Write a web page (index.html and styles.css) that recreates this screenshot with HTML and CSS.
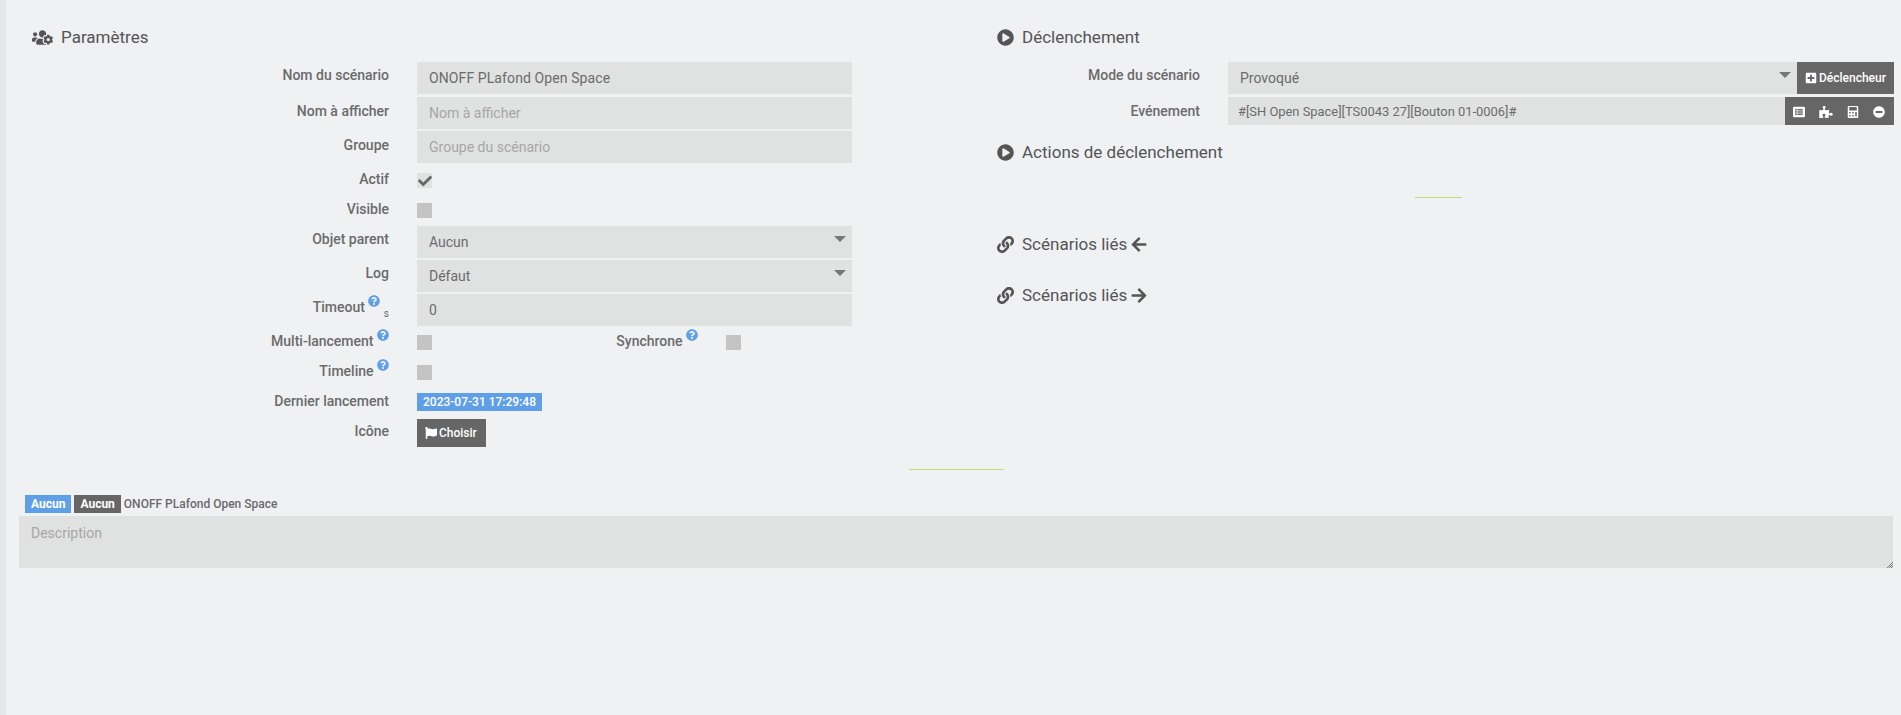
FILE: index.html
```html
<!DOCTYPE html>
<html lang="fr">
<head>
<meta charset="utf-8">
<title>Scénario</title>
<link rel="stylesheet" href="styles.css">
</head>
<body>
<svg class="sprite" xmlns="http://www.w3.org/2000/svg">
  <symbol id="i-users-cog" viewBox="0 0 640 512"><path d="M610.5 341.3c2.6-14.1 2.6-28.5 0-42.6l25.8-14.9c3-1.7 4.3-5.2 3.3-8.5-6.7-21.6-18.2-41.2-33.2-57.4-2.3-2.5-6-3.1-9-1.4l-25.8 14.9c-10.9-9.3-23.4-16.5-36.9-21.3v-29.8c0-3.4-2.4-6.4-5.7-7.1-22.3-5-45-4.8-66.2 0-3.3.7-5.7 3.7-5.7 7.1v29.8c-13.5 4.8-26 12-36.9 21.3l-25.8-14.9c-2.9-1.7-6.7-1.1-9 1.4-15 16.2-26.5 35.8-33.2 57.4-1 3.3.4 6.8 3.3 8.5l25.8 14.9c-2.6 14.1-2.6 28.5 0 42.6l-25.8 14.9c-3 1.7-4.3 5.2-3.3 8.5 6.7 21.6 18.2 41.1 33.2 57.4 2.3 2.5 6 3.1 9 1.4l25.8-14.9c10.9 9.3 23.4 16.5 36.9 21.3v29.8c0 3.4 2.4 6.4 5.7 7.1 22.3 5 45 4.8 66.2 0 3.3-.7 5.7-3.7 5.7-7.1v-29.8c13.5-4.8 26-12 36.9-21.3l25.8 14.9c2.9 1.7 6.7 1.1 9-1.4 15-16.2 26.5-35.8 33.2-57.4 1-3.3-.4-6.8-3.3-8.5l-25.8-14.9zM496 368.5c-26.8 0-48.5-21.8-48.5-48.5s21.8-48.5 48.5-48.5 48.5 21.8 48.5 48.5-21.7 48.5-48.5 48.5zM96 224c35.3 0 64-28.7 64-64s-28.7-64-64-64-64 28.7-64 64 28.7 64 64 64zm224 32c1.9 0 3.7-.5 5.6-.6 8.3-21.7 20.5-42.1 36.3-59.2 7.4-8 17.9-12.6 28.9-12.6 6.9 0 13.7 1.8 19.6 5.3l7.9 4.6c.8-.5 1.6-.9 2.4-1.4 7-14.6 11.2-30.8 11.2-48 0-61.9-50.1-112-112-112S208 82.1 208 144c0 61.9 50.1 112 112 112zm105.2 194.5c-2.3-1.2-4.6-2.6-6.8-3.9-8.2 4.8-15.3 9.8-27.5 9.8-10.9 0-21.4-4.6-28.9-12.6-18.3-19.8-32.3-43.9-40.2-69.6-10.7-34.5 24.9-49.7 25.8-50.3-.1-2.6-.1-5.2 0-7.8l-7.9-4.6c-3.8-2.2-7-5-9.8-8.1-3.3.2-6.5.6-9.8.6-24.6 0-47.6-6-68.5-16h-8.3C179.6 288 128 339.6 128 403.2V432c0 26.5 21.5 48 48 48h255.4c-3.7-6-6.2-12.8-6.2-20.3v-9.2zM173.1 274.6C161.5 263.1 145.6 256 128 256H64c-35.3 0-64 28.7-64 64v32c0 17.7 14.3 32 32 32h65.9c6.3-47.4 34.9-87.3 75.2-109.4z"/></symbol>
  <symbol id="i-play" viewBox="0 0 512 512"><path d="M256 8C119 8 8 119 8 256s111 248 248 248 248-111 248-248S393 8 256 8zm115.7 272l-176 101c-15.8 8.8-35.7-2.5-35.7-21V152c0-18.4 19.8-29.8 35.7-21l176 107c16.4 9.2 16.4 32.9 0 42z"/></symbol>
  <symbol id="i-help" viewBox="0 0 512 512"><path d="M504 256c0 136.997-111.043 248-248 248S8 392.997 8 256C8 119.083 119.043 8 256 8s248 111.083 248 248zM262.655 90c-54.497 0-89.255 22.957-116.549 63.758-3.536 5.286-2.353 12.415 2.715 16.258l34.699 26.31c5.205 3.947 12.621 3.008 16.665-2.122 17.864-22.658 30.113-35.797 57.303-35.797 20.429 0 45.698 13.148 45.698 32.958 0 14.976-12.363 22.667-32.534 33.976C247.128 238.528 216 254.941 216 296v4c0 6.627 5.373 12 12 12h56c6.627 0 12-5.373 12-12v-1.333c0-28.462 83.186-29.647 83.186-106.667 0-58.002-60.165-102-116.531-102zM256 338c-25.365 0-46 20.635-46 46 0 25.364 20.635 46 46 46s46-20.636 46-46c0-25.365-20.635-46-46-46z"/></symbol>
  <symbol id="i-link" viewBox="0 0 512 512"><path d="M326.612 185.391c59.747 59.809 58.927 155.698.36 214.59-.11.12-.24.25-.36.37l-67.2 67.2c-59.27 59.27-155.699 59.262-214.96 0-59.27-59.26-59.27-155.7 0-214.96l37.106-37.106c9.84-9.84 26.786-3.3 27.294 10.606.648 17.722 3.826 35.527 9.69 52.721 1.986 5.822.567 12.262-3.783 16.612l-13.087 13.087c-28.026 28.026-28.905 73.66-1.155 101.96 28.024 28.579 74.086 28.749 102.325.51l67.2-67.19c28.191-28.191 28.073-73.757 0-101.83-3.701-3.694-7.429-6.564-10.341-8.569a16.037 16.037 0 0 1-6.947-12.606c-.396-10.567 3.348-21.456 11.698-29.806l21.054-21.055c5.521-5.521 14.182-6.199 20.584-1.731a152.482 152.482 0 0 1 20.522 17.197zM467.547 44.449c-59.261-59.262-155.69-59.27-214.96 0l-67.2 67.2c-.12.12-.25.25-.36.37-58.566 58.892-59.387 154.781.36 214.59a152.454 152.454 0 0 0 20.521 17.196c6.402 4.468 15.064 3.789 20.584-1.731l21.054-21.055c8.35-8.35 12.094-19.239 11.698-29.806a16.037 16.037 0 0 0-6.947-12.606c-2.912-2.005-6.64-4.875-10.341-8.569-28.073-28.073-28.191-73.639 0-101.83l67.2-67.19c28.239-28.239 74.3-28.069 102.325.51 27.75 28.3 26.872 73.934-1.155 101.96l-13.087 13.087c-4.35 4.35-5.769 10.79-3.783 16.612 5.864 17.194 9.042 34.999 9.69 52.721.509 13.906 17.454 20.446 27.294 10.606l37.106-37.106c59.271-59.259 59.271-155.699.001-214.959z"/></symbol>
  <symbol id="i-left" viewBox="0 0 448 512"><path d="M257.5 445.1l-22.2 22.2c-9.4 9.4-24.6 9.4-33.9 0L7 273c-9.4-9.4-9.4-24.6 0-33.9L201.4 44.7c9.4-9.4 24.6-9.4 33.9 0l22.2 22.2c9.5 9.5 9.3 25-.4 34.3L136.6 216H424c13.3 0 24 10.7 24 24v32c0 13.3-10.7 24-24 24H136.6l120.5 114.8c9.8 9.3 10 24.8.4 34.3z"/></symbol>
  <symbol id="i-right" viewBox="0 0 448 512"><path d="M190.5 66.9l22.2-22.2c9.4-9.4 24.6-9.4 33.9 0L441 239c9.4 9.4 9.4 24.6 0 33.9L246.6 467.3c-9.4 9.4-24.6 9.4-33.9 0l-22.2-22.2c-9.5-9.5-9.3-25 .4-34.3L311.4 296H24c-13.3 0-24-10.7-24-24v-32c0-13.3 10.7-24 24-24h287.4L190.9 101.2c-9.8-9.3-10-24.8-.4-34.3z"/></symbol>
  <symbol id="i-plus" viewBox="0 0 448 512"><path d="M400 32H48C21.5 32 0 53.5 0 80v352c0 26.5 21.5 48 48 48h352c26.5 0 48-21.5 48-48V80c0-26.5-21.5-48-48-48zm-32 252c0 6.6-5.4 12-12 12h-92v92c0 6.6-5.4 12-12 12h-56c-6.6 0-12-5.4-12-12v-92H92c-6.6 0-12-5.4-12-12v-56c0-6.6 5.4-12 12-12h92v-92c0-6.6 5.4-12 12-12h56c6.6 0 12 5.4 12 12v92h92c6.6 0 12 5.4 12 12v56z"/></symbol>
  <symbol id="i-flag" viewBox="0 0 512 512"><path d="M349.565 98.783C295.978 98.783 251.721 64 184.348 64c-24.955 0-47.309 4.384-68.045 12.013a55.947 55.947 0 0 0 3.586-23.562C118.117 24.015 94.806 1.206 66.338.048 34.345-1.254 8 24.296 8 56c0 19.026 9.497 35.825 24 45.945V488c0 13.255 10.745 24 24 24h16c13.255 0 24-10.745 24-24v-94.4c28.311-12.064 63.582-22.122 114.435-22.122 53.588 0 97.844 34.783 165.217 34.783 48.169 0 86.667-16.294 122.505-40.858C506.84 359.452 512 349.571 512 339.045v-243.1c0-23.393-24.269-38.87-45.485-29.016-34.338 15.948-76.454 31.854-116.95 31.854z"/></symbol>
  <symbol id="i-minus" viewBox="0 0 512 512"><path d="M256 8C119 8 8 119 8 256s111 248 248 248 248-111 248-248S393 8 256 8zM124 296c-6.6 0-12-5.4-12-12v-56c0-6.6 5.4-12 12-12h264c6.6 0 12 5.4 12 12v56c0 6.6-5.4 12-12 12H124z"/></symbol>
  <symbol id="i-check" viewBox="0 0 512 512"><path d="M173.898 439.404l-166.4-166.4c-9.997-9.997-9.997-26.206 0-36.204l36.203-36.204c9.997-9.998 26.207-9.998 36.204 0L192 312.69 432.095 72.596c9.997-9.997 26.207-9.997 36.204 0l36.203 36.204c9.997 9.997 9.997 26.206 0 36.204l-294.4 294.401c-9.998 9.997-26.207 9.997-36.204-.001z"/></symbol>
  <symbol id="i-list" viewBox="0 0 512 512"><path d="M464 480H48c-26.51 0-48-21.49-48-48V80c0-26.51 21.49-48 48-48h416c26.51 0 48 21.49 48 48v352c0 26.51-21.49 48-48 48zM128 120c-22.091 0-40 17.909-40 40s17.909 40 40 40 40-17.909 40-40-17.909-40-40-40zm0 96c-22.091 0-40 17.909-40 40s17.909 40 40 40 40-17.909 40-40-17.909-40-40-40zm0 96c-22.091 0-40 17.909-40 40s17.909 40 40 40 40-17.909 40-40-17.909-40-40-40zm288-136v-32c0-6.627-5.373-12-12-12H204c-6.627 0-12 5.373-12 12v32c0 6.627 5.373 12 12 12h200c6.627 0 12-5.373 12-12zm0 96v-32c0-6.627-5.373-12-12-12H204c-6.627 0-12 5.373-12 12v32c0 6.627 5.373 12 12 12h200c6.627 0 12-5.373 12-12zm0 96v-32c0-6.627-5.373-12-12-12H204c-6.627 0-12 5.373-12 12v32c0 6.627 5.373 12 12 12h200c6.627 0 12-5.373 12-12z"/></symbol>
  <symbol id="i-puzzle" viewBox="0 0 576 512"><path d="M519.442 288.651c-41.519 0-59.5 31.593-82.058 31.593C377.409 320.244 432 144 432 144s-196.288 80-196.288-3.297c0-35.827 36.288-46.25 36.288-85.985C272 19.216 243.885 0 210.539 0c-34.654 0-66.366 18.891-66.366 56.346 0 41.364 31.711 59.277 31.711 81.75C175.885 207.719 0 166.758 0 166.758v333.237s178.635 41.047 178.635-28.662c0-22.473-40-40.107-40-81.471 0-37.456 29.25-56.346 63.577-56.346 33.673 0 61.788 19.216 61.788 54.717 0 39.735-36.288 50.158-36.288 85.985 0 60.803 129.675 25.73 181.23 25.73 0 0-34.725-120.101 25.827-120.101 35.962 0 46.423 36.152 86.308 36.152C556.712 416 576 387.99 576 354.443c0-34.199-18.962-65.792-56.558-65.792z"/></symbol>
  <symbol id="i-calc" viewBox="0 0 448 512"><path d="M400 0H48C22.4 0 0 22.4 0 48v416c0 25.6 22.4 48 48 48h352c25.6 0 48-22.4 48-48V48c0-25.6-22.4-48-48-48zM128 435c0 6.6-5.4 12-12 12H76c-6.6 0-12-5.4-12-12v-40c0-6.6 5.4-12 12-12h40c6.6 0 12 5.4 12 12v40zm0-128c0 6.6-5.4 12-12 12H76c-6.6 0-12-5.4-12-12v-40c0-6.6 5.4-12 12-12h40c6.6 0 12 5.4 12 12v40zm128 128c0 6.6-5.4 12-12 12h-40c-6.6 0-12-5.4-12-12v-40c0-6.6 5.4-12 12-12h40c6.6 0 12 5.4 12 12v40zm0-128c0 6.6-5.4 12-12 12h-40c-6.6 0-12-5.4-12-12v-40c0-6.6 5.4-12 12-12h40c6.6 0 12 5.4 12 12v40zm128 128c0 6.6-5.4 12-12 12h-40c-6.6 0-12-5.4-12-12V267c0-6.6 5.4-12 12-12h40c6.6 0 12 5.4 12 12v168zm0-256c0 6.6-5.4 12-12 12H76c-6.6 0-12-5.4-12-12V51c0-6.6 5.4-12 12-12h296c6.6 0 12 5.4 12 12v128z"/></symbol>
</svg>

<main class="page">
  <div class="columns">
    <section class="col col-left">
      <h3 class="heading"><svg class="ic ic-cog"><use href="#i-users-cog"/></svg>Paramètres</h3>
      <div class="row tall"><label class="lbl">Nom du scénario</label><div class="field"><input class="ctl ctl-name" value="ONOFF PLafond Open Space"></div></div>
      <div class="row"><label class="lbl lbl-low">Nom à afficher</label><div class="field"><input class="ctl" placeholder="Nom à afficher"></div></div>
      <div class="row tall"><label class="lbl lbl-low">Groupe</label><div class="field"><input class="ctl" placeholder="Groupe du scénario"></div></div>
      <div class="row slim"><label class="lbl">Actif</label><div class="field"><span class="cb on"><svg class="ic-check"><use href="#i-check"/></svg></span></div></div>
      <div class="row slim"><label class="lbl">Visible</label><div class="field"><span class="cb"></span></div></div>
      <div class="row"><label class="lbl">Objet parent</label><div class="field sel"><select class="ctl"><option>Aucun</option></select></div></div>
      <div class="row"><label class="lbl">Log</label><div class="field sel"><select class="ctl"><option>Défaut</option></select></div></div>
      <div class="row"><label class="lbl">Timeout <svg class="help"><use href="#i-help"/></svg> <sub class="unit">s</sub></label><div class="field"><input class="ctl" value="0"></div></div>
      <div class="row slim"><label class="lbl">Multi-lancement <svg class="help"><use href="#i-help"/></svg></label><div class="field split"><span class="cb"></span><label class="lbl sublbl">Synchrone <svg class="help"><use href="#i-help"/></svg></label><span class="cb"></span></div></div>
      <div class="row slim"><label class="lbl">Timeline <svg class="help"><use href="#i-help"/></svg></label><div class="field"><span class="cb"></span></div></div>
      <div class="row slim"><label class="lbl">Dernier lancement</label><div class="field"><span class="tag tag-blue tag-date">2023-07-31 17:29:48</span></div></div>
      <div class="row slim"><label class="lbl">Icône</label><div class="field"><a class="btn btn-icon"><svg class="ic-btn"><use href="#i-flag"/></svg>Choisir</a></div></div>
    </section>

    <section class="col col-right">
      <h3 class="heading"><svg class="ic"><use href="#i-play"/></svg>Déclenchement</h3>
      <div class="row tall"><label class="lbl">Mode du scénario</label><div class="field group sel"><select class="ctl"><option>Provoqué</option></select><a class="btn btn-trigger"><svg class="ic-btn"><use href="#i-plus"/></svg>Déclencheur</a></div></div>
      <div class="row"><label class="lbl lbl-low">Evénement</label><div class="field group"><input class="ctl ctl-small" value="#[SH Open Space][TS0043 27][Bouton 01-0006]#"><div class="btn-set"><svg class="ic-tool"><use href="#i-list"/></svg><svg class="ic-tool ic-wide"><use href="#i-puzzle"/></svg><svg class="ic-tool"><use href="#i-calc"/></svg><svg class="ic-tool"><use href="#i-minus"/></svg></div></div></div>
      <h3 class="heading heading-actions"><svg class="ic"><use href="#i-play"/></svg>Actions de déclenchement</h3>
      <div class="rule rule-green"></div>
      <h3 class="heading heading-linked"><svg class="ic"><use href="#i-link"/></svg>Scénarios liés<svg class="ic-arrow"><use href="#i-left"/></svg></h3>
      <h3 class="heading heading-linked2"><svg class="ic"><use href="#i-link"/></svg>Scénarios liés<svg class="ic-arrow"><use href="#i-right"/></svg></h3>
    </section>
  </div>

  <div class="rule rule-grey"></div>

  <div class="meta"><span class="tag tag-blue">Aucun</span><span class="tag tag-dark">Aucun</span><span class="meta-name">ONOFF PLafond Open Space</span></div>
  <div class="desc-wrap"><textarea class="desc" placeholder="Description"></textarea></div>
</main>
</body>
</html>
```

FILE: styles.css
```css
* { box-sizing: border-box; }

html, body { height: 100%; }

body {
  margin: 0;
  background: #eff1f3;
  border-left: 6px solid #e6e7e8;
  color: #6b6b6b;
  font-family: Roboto, "Liberation Sans", sans-serif;
  font-size: 14px;
  overflow: hidden;
}

.sprite { display: none; }

.page { padding-top: 24px; }

.columns { display: flex; height: 433px; }

.col-left { width: 991px; padding-left: 26px; --label: 357px; --field: 435px; }
.col-right { flex: 1; padding-right: 7px; --label: 203px; --field: 666px; }

.heading {
  display: flex;
  align-items: center;
  height: 26px;
  margin: 0 0 12px;
  color: #555;
  font-size: 17px;
  font-weight: 400;
  line-height: 26px;
}

.heading-actions { margin: 8px 0 0; }
.heading-linked { margin: 0; }
.heading-linked2 { margin: 25px 0 0; }

.ic { width: 17px; height: 17px; margin-right: 8px; fill: #555; flex: none; }
.ic-cog { width: 21px; margin-right: 8px; }
.ic-arrow { width: 16px; height: 17px; margin-left: 4px; fill: #555; }

.row { display: flex; align-items: flex-start; gap: 28px; height: 34px; }
.tall { height: 35px; }
.slim { height: 30px; }

.lbl {
  width: var(--label);
  flex: none;
  color: #6b6b6b;
  font-size: 14px;
  font-weight: 500;
  line-height: 26px;
  text-align: right;
  white-space: nowrap;
}

.lbl-low { padding-top: 1px; }

.field { position: relative; width: var(--field); flex: none; }

.ctl {
  display: block;
  width: 100%;
  height: 32px;
  padding: 0 12px;
  border: 0;
  border-radius: 0;
  background: #e0e2e1;
  color: #6b6b6b;
  font-family: Roboto, "Liberation Sans", sans-serif;
  font-size: 14px;
  appearance: none;
}

.ctl::placeholder, .desc::placeholder { color: #a6a6a6; opacity: 1; }

.ctl-name { letter-spacing: .1px; }

.ctl-small { height: 28px; padding: 0 10px; font-size: 12.9px; flex: 1; width: auto; min-width: 0; }

.sel::after {
  content: "";
  position: absolute;
  top: 10px;
  left: 417px;
  border-left: 6px solid transparent;
  border-right: 6px solid transparent;
  border-top: 6px solid #777;
}

.group { display: flex; }
.group .ctl { flex: 1; width: auto; min-width: 0; }
.group.sel::after { left: 551px; }

.cb {
  display: flex;
  align-items: center;
  justify-content: center;
  width: 15px;
  height: 15px;
  margin-top: 7px;
  background: #c4c4c4;
  flex: none;
}

.cb.on { background: #e0e2e1; }

.ic-check { width: 14px; height: 14px; fill: #666; }

.split { display: flex; }
.sublbl { width: 266px; margin-right: 28px; }

.help { width: 12px; height: 12px; fill: #5d9fe8; vertical-align: 5px; }

.unit { font-size: 10px; font-weight: 400; line-height: 0; vertical-align: -5px; }

.tag {
  display: inline-block;
  height: 18px;
  padding: 0 6px;
  color: #fff;
  font-size: 12px;
  font-weight: 700;
  line-height: 18px;
}

.tag-blue { background: #5f9fe8; }
.tag-dark { background: #666; }
.tag-date { margin-top: 5px; font-weight: 500; }

.btn {
  display: inline-flex;
  align-items: center;
  background: #666;
  color: #fff;
  font-size: 12px;
  font-weight: 500;
}

.btn-icon { width: 69px; height: 28px; margin-top: 1px; padding-left: 8px; }
.btn-trigger { width: 97px; height: 32px; padding-left: 8px; flex: none; }

.ic-btn { width: 12px; height: 12px; margin-right: 2px; fill: #fff; flex: none; }

.btn-set {
  display: flex;
  align-items: center;
  gap: 14px;
  width: 109px;
  height: 28px;
  padding: 2px 0 0 8px;
  background: #666;
  flex: none;
}

.ic-tool { width: 12px; height: 12px; fill: #fff; flex: none; }
.ic-tool.ic-wide { width: 14px; }

.rule { height: 1px; background: #bedc7e; }
.rule-green { width: 47px; margin: 32px 0 33px 418px; }
.rule-grey { width: 95px; margin: 12px 0 0 903px; }

.meta { display: flex; gap: 3px; height: 18px; margin: 25px 0 3px 19px; }
.meta-name { color: #6b6b6b; font-size: 12px; font-weight: 500; line-height: 18px; }

.desc-wrap { position: relative; width: 1874px; height: 52px; margin-left: 13px; }

.desc-wrap::after {
  content: "";
  position: absolute;
  right: 0;
  bottom: 0;
  width: 7px;
  height: 7px;
  background: repeating-conic-gradient(#7d7d7d 0 25%, #e0e2e1 0 50%) 0 0 / 2px 2px;
  clip-path: polygon(100% 0, 100% 100%, 0 100%);
}

.desc {
  display: block;
  width: 100%;
  height: 100%;
  padding: 9px 12px;
  border: 0;
  outline: 0;
  resize: none;
  background: #e0e2e1;
  color: #6b6b6b;
  font-family: Roboto, "Liberation Sans", sans-serif;
  font-size: 14px;
}
```
